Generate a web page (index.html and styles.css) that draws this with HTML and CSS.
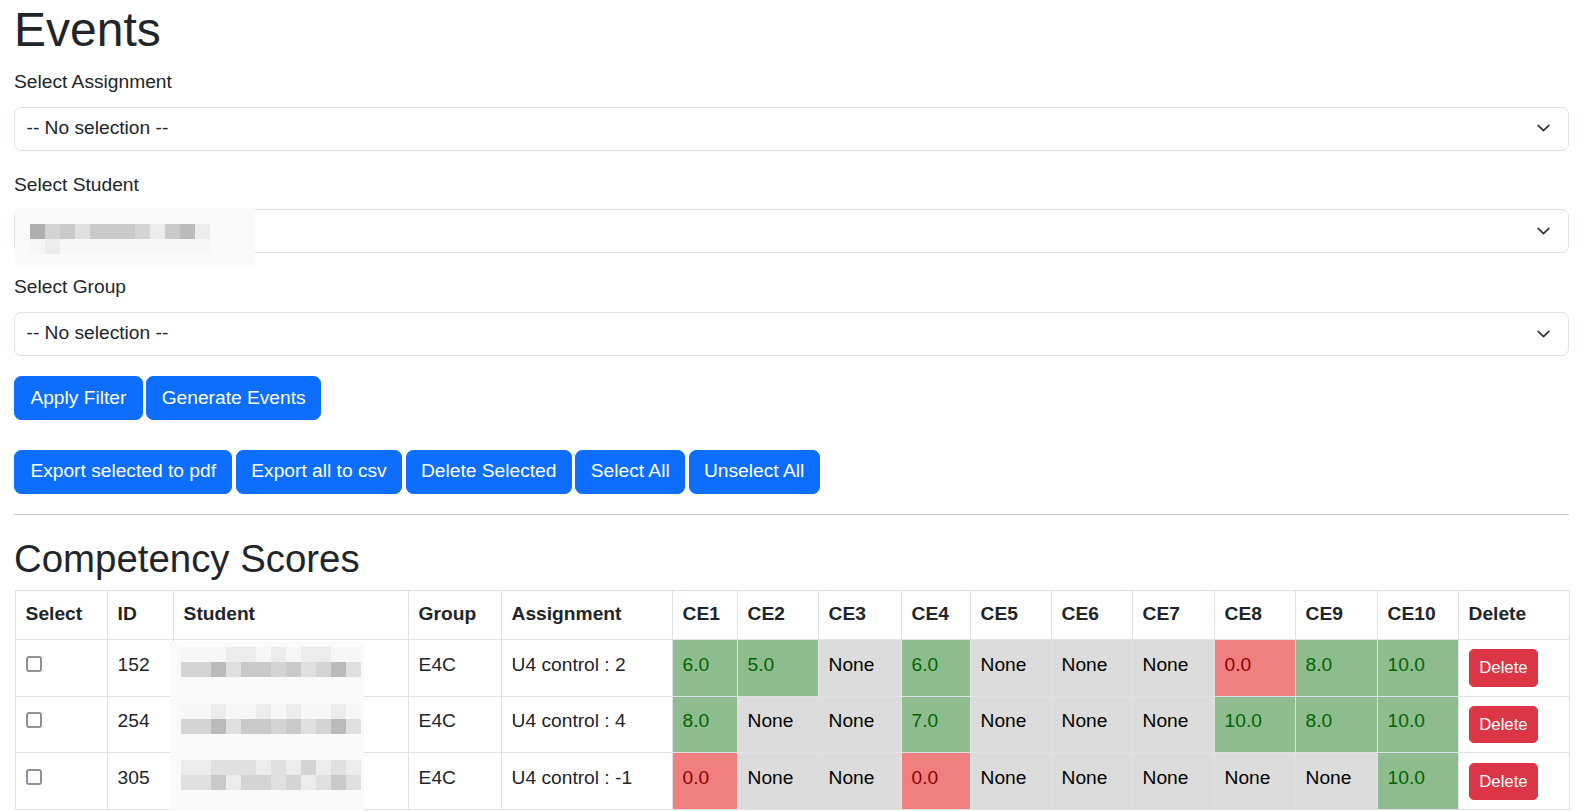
FILE: index.html
```html
<!DOCTYPE html>
<html lang="en">
<head>
<meta charset="utf-8">
<title>Events</title>
<link rel="stylesheet" href="styles.css">
</head>
<body>
<div class="page">
  <h1 class="title">Events</h1>
  <form class="filters">
    <div class="field">
      <label class="field-label" for="assignment">Select Assignment</label>
      <select class="select" id="assignment"><option>-- No selection --</option></select>
    </div>
    <div class="field">
      <label class="field-label" for="student">Select Student</label>
      <div class="select-wrap">
        <select class="select" id="student"><option></option></select>
        <div class="redact redact-select">
          <div class="redact-line">
            <span class="t6"></span><span class="t3"></span><span class="t4"></span><span class="t2"></span><span class="t4"></span><span class="t4"></span><span class="t4"></span><span class="t3"></span><span class="t1"></span><span class="t4"></span><span class="t5"></span><span class="t1"></span>
          </div>
          <div class="redact-line">
            <span class="t0"></span><span class="t1"></span><span class="t0"></span><span class="t0"></span><span class="t0"></span><span class="t0"></span><span class="t0"></span><span class="t0"></span><span class="t0"></span><span class="t0"></span><span class="t0"></span><span class="t0"></span>
          </div>
        </div>
      </div>
    </div>
    <div class="field">
      <label class="field-label" for="group">Select Group</label>
      <select class="select" id="group"><option>-- No selection --</option></select>
    </div>
    <div class="btn-row filter-actions">
      <button type="button" class="btn btn-primary">Apply Filter</button>
      <button type="button" class="btn btn-primary">Generate Events</button>
    </div>
  </form>

  <div class="btn-row bulk-actions">
    <button type="button" class="btn btn-primary">Export selected to pdf</button>
    <button type="button" class="btn btn-primary">Export all to csv</button>
    <button type="button" class="btn btn-primary">Delete Selected</button>
    <button type="button" class="btn btn-primary">Select All</button>
    <button type="button" class="btn btn-primary">Unselect All</button>
  </div>

  <hr class="divider">

  <h2 class="subtitle">Competency Scores</h2>

  <table class="scores">
    <colgroup>
      <col class="c-select"><col class="c-id"><col class="c-student"><col class="c-group"><col class="c-assign">
      <col class="c-ce1"><col class="c-ce2"><col class="c-ce3"><col class="c-ce4"><col class="c-ce5">
      <col class="c-ce6"><col class="c-ce7"><col class="c-ce8"><col class="c-ce9"><col class="c-ce10"><col class="c-del">
    </colgroup>
    <thead>
      <tr>
        <th>Select</th><th>ID</th><th>Student</th><th>Group</th><th>Assignment</th>
        <th>CE1</th><th>CE2</th><th>CE3</th><th>CE4</th><th>CE5</th><th>CE6</th><th>CE7</th><th>CE8</th><th>CE9</th><th>CE10</th><th>Delete</th>
      </tr>
    </thead>
    <tbody>
      <tr>
        <td><input type="checkbox" class="check"></td>
        <td>152</td>
        <td class="student"><div class="redact-cell"><div class="redact-line"><span class="t0"></span><span class="t0"></span><span class="t0"></span><span class="t1"></span><span class="t1"></span><span class="t0"></span><span class="t1"></span><span class="t0"></span><span class="t1"></span><span class="t1"></span><span class="t0"></span><span class="t0"></span></div><div class="redact-line"><span class="t3"></span><span class="t3"></span><span class="t5"></span><span class="t2"></span><span class="t4"></span><span class="t4"></span><span class="t3"></span><span class="t4"></span><span class="t2"></span><span class="t3"></span><span class="t5"></span><span class="t2"></span></div></div></td>
        <td>E4C</td>
        <td>U4 control : 2</td>
        <td class="score ok">6.0</td>
        <td class="score ok">5.0</td>
        <td class="score na">None</td>
        <td class="score ok">6.0</td>
        <td class="score na">None</td>
        <td class="score na">None</td>
        <td class="score na">None</td>
        <td class="score bad">0.0</td>
        <td class="score ok">8.0</td>
        <td class="score ok">10.0</td>
        <td class="action"><button type="button" class="btn btn-danger btn-sm">Delete</button></td>
      </tr>
      <tr>
        <td><input type="checkbox" class="check"></td>
        <td>254</td>
        <td class="student"><div class="redact-cell"><div class="redact-line"><span class="t0"></span><span class="t0"></span><span class="t1"></span><span class="t0"></span><span class="t0"></span><span class="t1"></span><span class="t0"></span><span class="t1"></span><span class="t0"></span><span class="t0"></span><span class="t1"></span><span class="t0"></span></div><div class="redact-line"><span class="t3"></span><span class="t3"></span><span class="t5"></span><span class="t2"></span><span class="t4"></span><span class="t4"></span><span class="t3"></span><span class="t4"></span><span class="t2"></span><span class="t3"></span><span class="t5"></span><span class="t2"></span></div></div></td>
        <td>E4C</td>
        <td>U4 control : 4</td>
        <td class="score ok">8.0</td>
        <td class="score na">None</td>
        <td class="score na">None</td>
        <td class="score ok">7.0</td>
        <td class="score na">None</td>
        <td class="score na">None</td>
        <td class="score na">None</td>
        <td class="score ok">10.0</td>
        <td class="score ok">8.0</td>
        <td class="score ok">10.0</td>
        <td class="action"><button type="button" class="btn btn-danger btn-sm">Delete</button></td>
      </tr>
      <tr>
        <td><input type="checkbox" class="check"></td>
        <td>305</td>
        <td class="student"><div class="redact-cell"><div class="redact-line"><span class="t1"></span><span class="t1"></span><span class="t2"></span><span class="t2"></span><span class="t2"></span><span class="t1"></span><span class="t2"></span><span class="t1"></span><span class="t3"></span><span class="t1"></span><span class="t2"></span><span class="t1"></span></div><div class="redact-line"><span class="t2"></span><span class="t2"></span><span class="t4"></span><span class="t1"></span><span class="t3"></span><span class="t3"></span><span class="t2"></span><span class="t3"></span><span class="t1"></span><span class="t2"></span><span class="t4"></span><span class="t2"></span></div></div></td>
        <td>E4C</td>
        <td>U4 control : -1</td>
        <td class="score bad">0.0</td>
        <td class="score na">None</td>
        <td class="score na">None</td>
        <td class="score bad">0.0</td>
        <td class="score na">None</td>
        <td class="score na">None</td>
        <td class="score na">None</td>
        <td class="score na">None</td>
        <td class="score na">None</td>
        <td class="score ok">10.0</td>
        <td class="action"><button type="button" class="btn btn-danger btn-sm">Delete</button></td>
      </tr>
    </tbody>
  </table>
</div>
</body>
</html>
```

FILE: styles.css
```css
* { box-sizing: border-box; }

html, body {
  margin: 0;
  padding: 0;
  background: #fff;
}

body {
  font-family: "Liberation Sans", Arial, sans-serif;
  font-size: 19.2px;
  line-height: 28.8px;
  color: #212529;
}

.page {
  padding: 1px 15px 0 14px;
}

.title {
  margin: 0 0 9.6px;
  font-size: 48px;
  line-height: 57.6px;
  font-weight: 400;
}

.filters {
  margin: 0;
}

.field {
  margin-bottom: 20.2px;
}

.field-label {
  display: block;
  margin-bottom: 9.6px;
}

.select-wrap {
  position: relative;
}

.select {
  display: block;
  width: 100%;
  height: 44px;
  margin: 0;
  padding: 0 43px 0 11.5px;
  font: inherit;
  color: #212529;
  background-color: #fff;
  background-image: url("data:image/svg+xml,%3csvg xmlns='http://www.w3.org/2000/svg' viewBox='0 0 16 16'%3e%3cpath fill='none' stroke='%23343a40' stroke-linecap='round' stroke-linejoin='round' stroke-width='2' d='m2 5 6 6 6-6'/%3e%3c/svg%3e");
  background-repeat: no-repeat;
  background-position: right 14.4px center;
  background-size: 19.2px 14.4px;
  border: 1.2px solid #dee2e6;
  border-radius: 7.2px;
  appearance: none;
  -webkit-appearance: none;
}

/* blurred (pixelated) personal data */
.redact {
  position: absolute;
  background: #fafafa;
}

.redact-select {
  left: 1px;
  top: -1px;
  width: 240px;
  height: 57px;
  padding: 16px 0 0 15px;
}

.redact-line {
  display: flex;
  height: 15px;
}

.redact-line span {
  width: 15px;
  height: 15px;
}

.t0 { background: #f7f7f7; }
.t1 { background: #ececec; }
.t2 { background: #e0e0e0; }
.t3 { background: #d4d4d4; }
.t4 { background: #c9c9c9; }
.t5 { background: #bbbbbb; }
.t6 { background: #afafaf; }

.btn-row {
  display: flex;
  gap: 3.5px;
}

.bulk-actions {
  margin-top: 29.6px;
}

.btn {
  height: 44px;
  padding: 0 14.4px;
  font: inherit;
  line-height: 28.8px;
  border: 1.2px solid transparent;
  border-radius: 7.2px;
  cursor: pointer;
}

.btn-primary {
  color: #fff;
  background: #0d6efd;
  border-color: #0d6efd;
}

.btn-primary:first-child {
  padding: 0 15.4px;
}

.btn-danger {
  color: #fff;
  background: #dc3545;
  border-color: #dc3545;
}

.btn-sm {
  height: 37.2px;
  padding: 0 9.6px;
  font-size: 16.8px;
  line-height: 25.2px;
  border-radius: 4.8px;
}

.divider {
  margin: 20.6px 0 19.2px;
  border: 0;
  border-top: 1px solid #c8c9ca;
  height: 0;
}

.subtitle {
  margin: 0 0 5.6px;
  font-size: 38.4px;
  line-height: 50px;
  font-weight: 400;
}

.scores {
  width: 1554px;
  margin-left: 1px;
  border-collapse: collapse;
  table-layout: fixed;
}

.c-select { width: 92px; }
.c-id { width: 66px; }
.c-student { width: 235px; }
.c-group { width: 93px; }
.c-assign { width: 171px; }
.c-ce1 { width: 65px; }
.c-ce2 { width: 81px; }
.c-ce3 { width: 83px; }
.c-ce4 { width: 69px; }
.c-ce5 { width: 81px; }
.c-ce6 { width: 81px; }
.c-ce7 { width: 82px; }
.c-ce8 { width: 81px; }
.c-ce9 { width: 82px; }
.c-ce10 { width: 81px; }
.c-del { width: 111px; }

.scores th,
.scores td {
  border: 1px solid #dee2e6;
  padding: 10.8px 9.6px 9px;
  text-align: left;
  vertical-align: top;
  white-space: nowrap;
}

.scores th {
  padding-top: 9.6px;
  padding-bottom: 9.6px;
  font-weight: 700;
}

.scores td.action {
  padding-top: 9.6px;
}

.check {
  width: 16px;
  height: 16px;
  margin: 0;
  vertical-align: -1px;
  appearance: none;
  -webkit-appearance: none;
  border: 2px solid #8f8f9d;
  border-radius: 3px;
  background: #fff;
}

.student {
  position: relative;
}

.redact-cell {
  position: absolute;
  left: -4px;
  top: 2px;
  width: 194px;
  height: 60px;
  padding: 5px 0 0 11px;
  background: #fafafa;
}

.score.ok { background: #8fbc8f; color: #006400; }
.score.bad { background: #f08080; color: #8b0000; }
.score.na { background: #dcdcdc; color: #000; }
```
